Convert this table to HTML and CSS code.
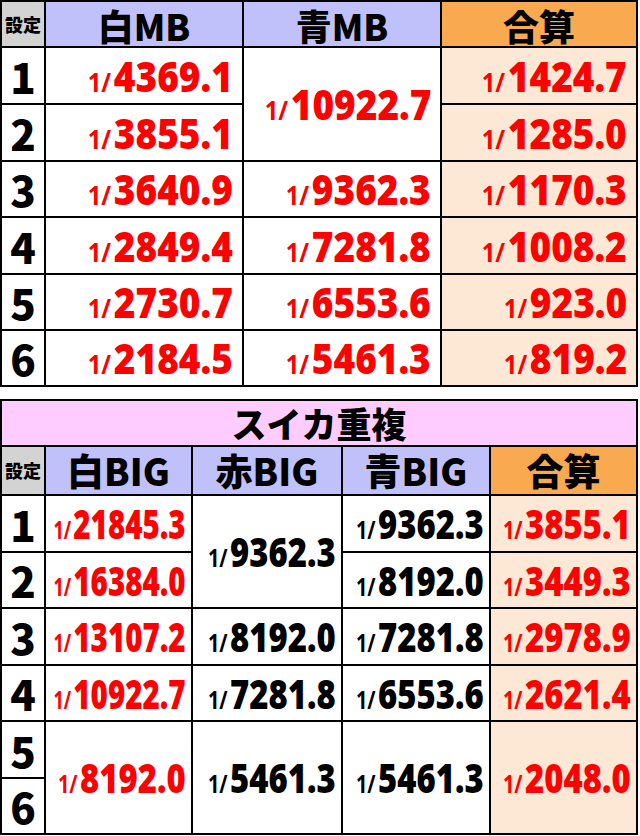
FILE: index.html
```html
<!DOCTYPE html>
<html lang="ja">
<head>
<meta charset="utf-8">
<link rel="stylesheet" href="styles.css">
</head>
<body>
<div class="tbl t1">
  <div class="h set">設定</div>
  <div class="h blue">白MB</div>
  <div class="h blue">青MB</div>
  <div class="h orange">合算</div>

  <div class="s">1</div>
  <div class="c red"><span class="v">1/<b>4369.1</b></span></div>
  <div class="c red span2"><span class="v">1/<b>10922.7</b></span></div>
  <div class="c red lo"><span class="v">1/<b>1424.7</b></span></div>

  <div class="s">2</div>
  <div class="c red"><span class="v">1/<b>3855.1</b></span></div>
  <div class="c red lo"><span class="v">1/<b>1285.0</b></span></div>

  <div class="s">3</div>
  <div class="c red"><span class="v">1/<b>3640.9</b></span></div>
  <div class="c red"><span class="v">1/<b>9362.3</b></span></div>
  <div class="c red lo"><span class="v">1/<b>1170.3</b></span></div>

  <div class="s">4</div>
  <div class="c red"><span class="v">1/<b>2849.4</b></span></div>
  <div class="c red"><span class="v">1/<b>7281.8</b></span></div>
  <div class="c red lo"><span class="v">1/<b>1008.2</b></span></div>

  <div class="s">5</div>
  <div class="c red"><span class="v">1/<b>2730.7</b></span></div>
  <div class="c red"><span class="v">1/<b>6553.6</b></span></div>
  <div class="c red lo"><span class="v">1/<b>923.0</b></span></div>

  <div class="s">6</div>
  <div class="c red"><span class="v">1/<b>2184.5</b></span></div>
  <div class="c red"><span class="v">1/<b>5461.3</b></span></div>
  <div class="c red lo"><span class="v">1/<b>819.2</b></span></div>
</div>

<div class="tbl t2">
  <div class="title">スイカ重複</div>
  <div class="h set">設定</div>
  <div class="h blue">白BIG</div>
  <div class="h blue">赤BIG</div>
  <div class="h blue">青BIG</div>
  <div class="h orange">合算</div>

  <div class="s">1</div>
  <div class="c red sm"><span class="v">1/<b>21845.3</b></span></div>
  <div class="c blk span2"><span class="v">1/<b>9362.3</b></span></div>
  <div class="c blk"><span class="v">1/<b>9362.3</b></span></div>
  <div class="c red lo"><span class="v">1/<b>3855.1</b></span></div>

  <div class="s">2</div>
  <div class="c red sm"><span class="v">1/<b>16384.0</b></span></div>
  <div class="c blk"><span class="v">1/<b>8192.0</b></span></div>
  <div class="c red lo"><span class="v">1/<b>3449.3</b></span></div>

  <div class="s">3</div>
  <div class="c red sm"><span class="v">1/<b>13107.2</b></span></div>
  <div class="c blk"><span class="v">1/<b>8192.0</b></span></div>
  <div class="c blk"><span class="v">1/<b>7281.8</b></span></div>
  <div class="c red lo"><span class="v">1/<b>2978.9</b></span></div>

  <div class="s">4</div>
  <div class="c red sm"><span class="v">1/<b>10922.7</b></span></div>
  <div class="c blk"><span class="v">1/<b>7281.8</b></span></div>
  <div class="c blk"><span class="v">1/<b>6553.6</b></span></div>
  <div class="c red lo"><span class="v">1/<b>2621.4</b></span></div>

  <div class="s">5</div>
  <div class="c red span2"><span class="v">1/<b>8192.0</b></span></div>
  <div class="c blk span2"><span class="v">1/<b>5461.3</b></span></div>
  <div class="c blk span2"><span class="v">1/<b>5461.3</b></span></div>
  <div class="c red lo span2"><span class="v">1/<b>2048.0</b></span></div>

  <div class="s">6</div>
</div>
</body>
</html>
```

FILE: styles.css
```css
html, body {
  margin: 0;
  padding: 0;
  background: #ffffff;
}

body {
  width: 640px;
  height: 836px;
  overflow: hidden;
  font-family: "Noto Sans CJK JP", "Noto Sans", sans-serif;
}

.tbl {
  display: grid;
  gap: 2px;
  padding: 2px;
  background: #000000;
  width: fit-content;
}

.t1 {
  grid-template-columns: 42px 196px 196px 194px;
  grid-template-rows: 44px 55px 55px 54px 55px 54px 54px;
}

.t2 {
  margin-top: 12px;
  grid-template-columns: 42px 145px 148px 146px 145px;
  grid-template-rows: 44px 47px 55px 54px 55px 54px 55px 54px;
}

.h {
  display: flex;
  align-items: center;
  justify-content: center;
  font-weight: 900;
  font-size: 37px;
  color: #000;
  line-height: 1.15;
}

.t1 .h {
  font-size: 36px;
  padding-top: 4px;
}

.h.set,
.t1 .h.set {
  background: #d3d3d3;
  font-size: 18px;
  padding-top: 0;
}

.blue {
  background: #c0c0fa;
}

.orange {
  background: #f9aa50;
}

.title {
  grid-column: 1 / -1;
  background: #ffccff;
  display: flex;
  align-items: center;
  justify-content: center;
  font-weight: 900;
  font-size: 35px;
  line-height: 1.2;
}

.s {
  background: #ffffff;
  display: flex;
  align-items: center;
  justify-content: center;
  font-weight: 900;
  font-size: 42px;
  line-height: 1;
}

.c {
  background: #ffffff;
  display: flex;
  align-items: center;
  justify-content: flex-end;
  padding-right: 9px;
  font-family: "Open Sans", "Noto Sans", sans-serif;
  font-weight: 700;
  line-height: 1;
}

.c.lo {
  background: #fde8d5;
}

.span2 {
  grid-row: span 2;
}

.red {
  color: #ff0000;
}

.blk {
  color: #000000;
}

.v {
  display: inline-block;
  flex: none;
  font-size: 27px;
  white-space: nowrap;
  transform: scaleX(0.88);
  transform-origin: right center;
}

.v b {
  font-size: 42px;
  margin-left: 3px;
}

.t2 .c {
  padding-right: 5px;
}

.t2 .v {
  font-size: 25px;
  transform: scaleX(0.8);
}

.t2 .v b {
  font-size: 41px;
}

.t2 .sm .v {
  transform: scaleX(0.72);
}
```
